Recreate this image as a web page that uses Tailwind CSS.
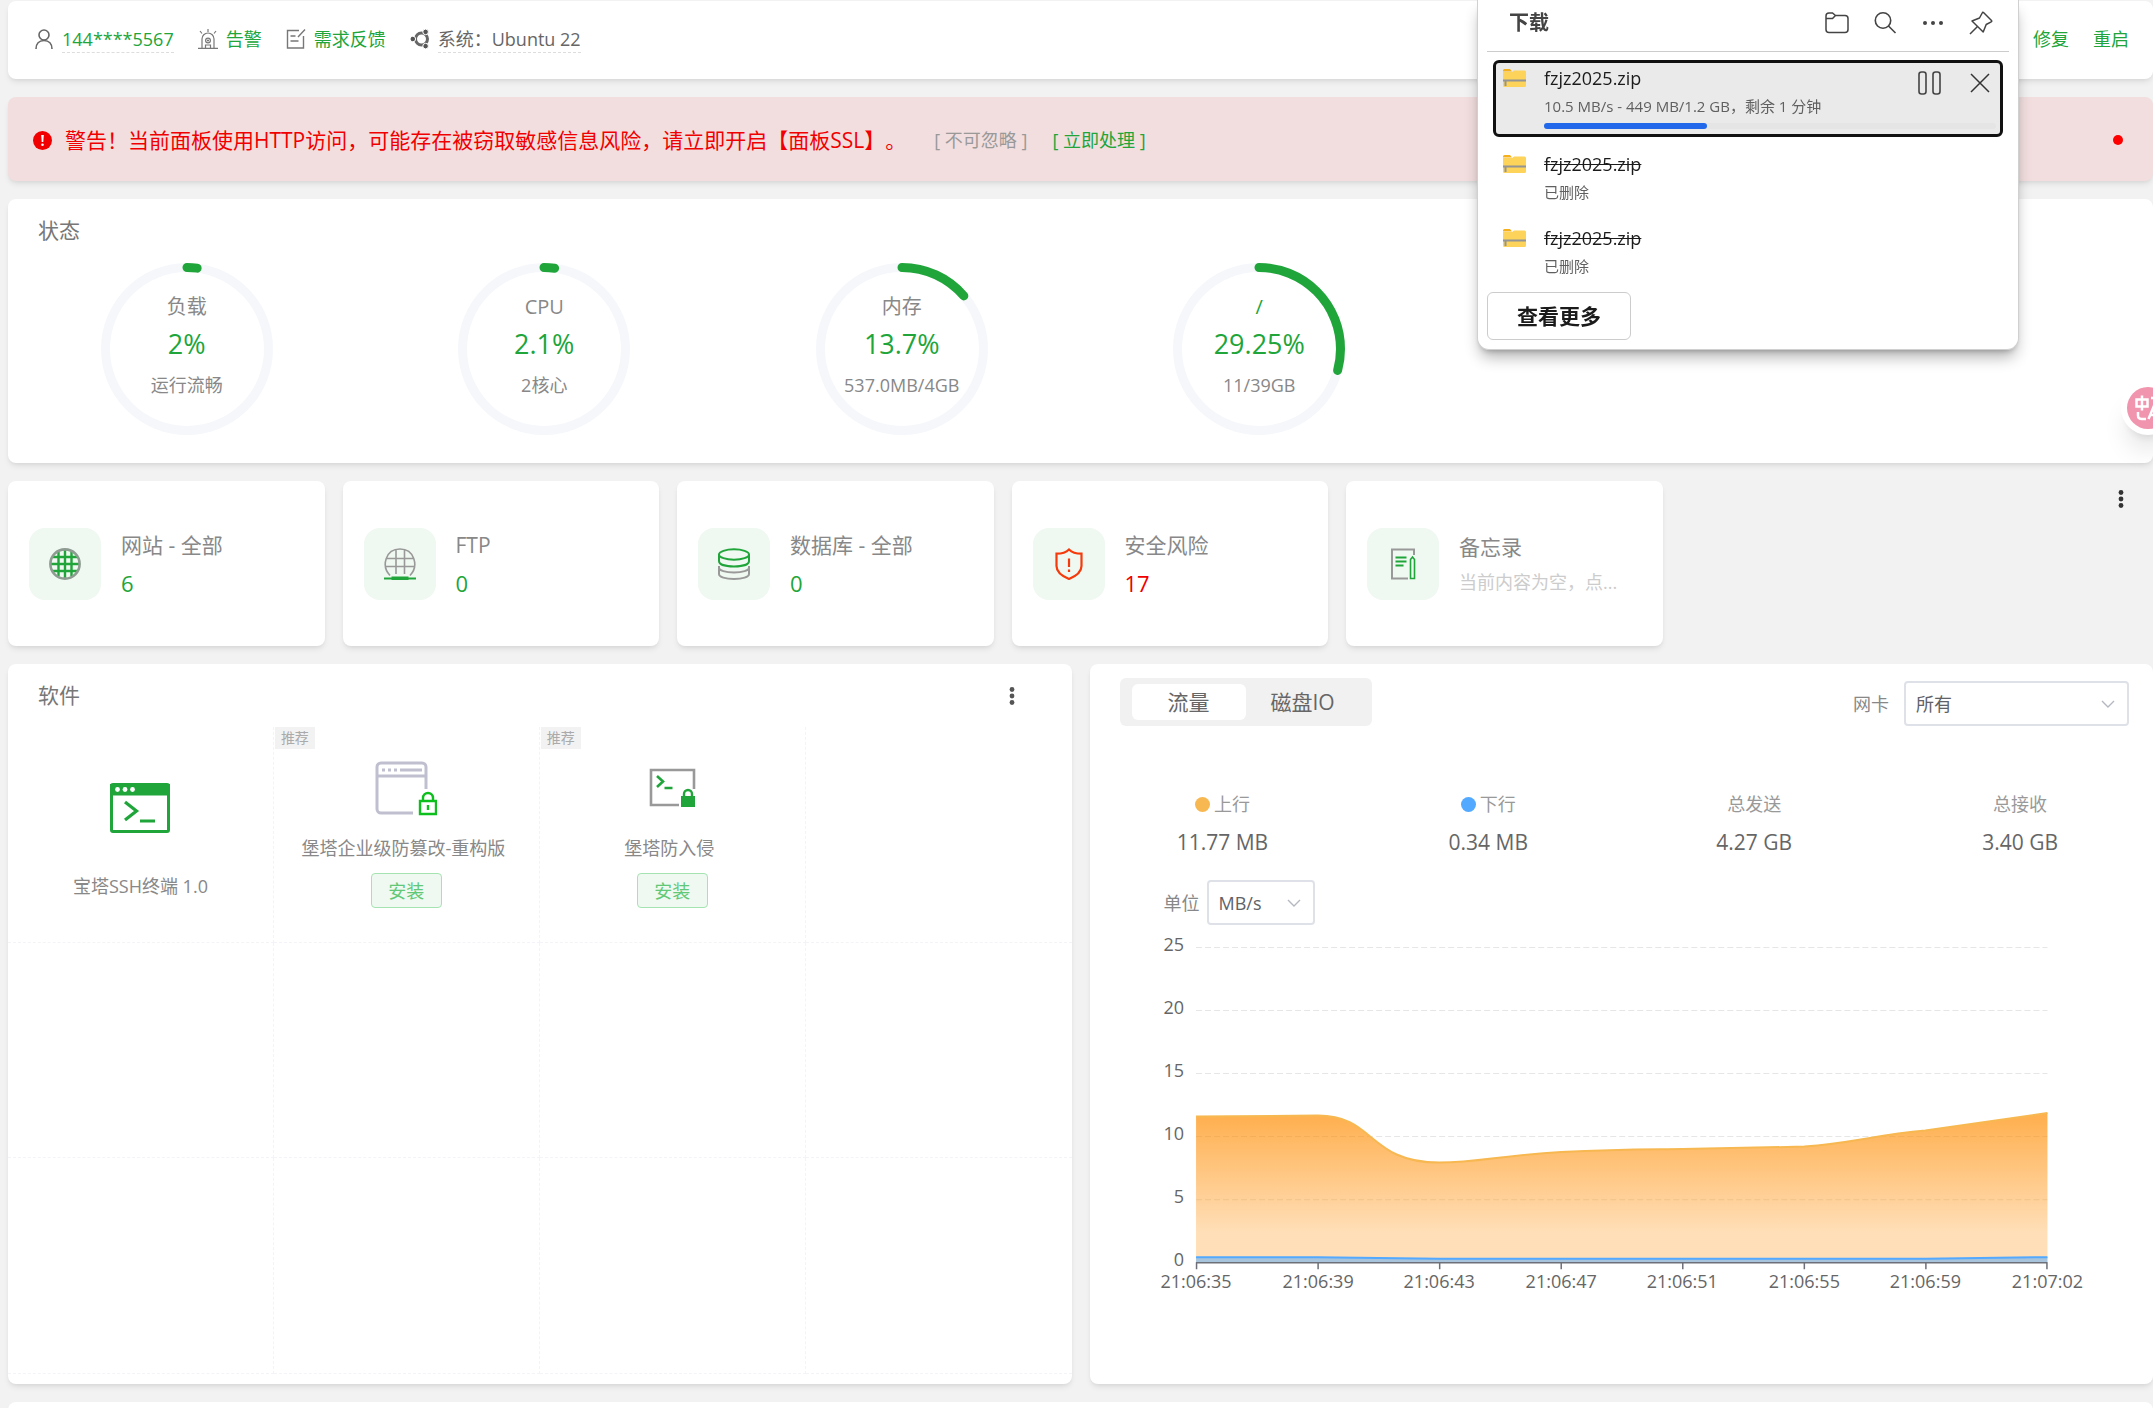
<!DOCTYPE html>
<html lang="zh-CN">
<head>
    <meta charset="UTF-8">
    <meta name="viewport" content="width=device-width, initial-scale=1.0">
    <title>宝塔面板 - 首页</title>
    <script src="https://cdn.jsdelivr.net/npm/@tailwindcss/browser@4"></script>
    <style>
        body {
            font-family: 'Open Sans', 'Noto Sans CJK SC', sans-serif;
            text-spacing-trim: space-all;
        }
    </style>
</head>
<body class="bg-[#f2f2f2] text-[#666] text-lg h-screen overflow-hidden">
<div class="relative flex flex-col gap-[18px] pt-px pl-2">

    <!-- 顶部信息栏 -->
    <header class="h-[78px] shrink-0 flex items-center justify-between bg-white rounded-lg shadow-md shadow-black/8 pb-[2px] pl-[26px] pr-[24px]">
        <div class="flex items-center gap-6 leading-[26px]">
            <div class="flex items-center gap-2">
                <svg class="w-5 h-5" viewBox="0 0 20 20" fill="none" stroke="#666" stroke-width="1.6">
                    <circle cx="10" cy="6" r="5"/>
                    <path d="M2 20c0-5 3-8.5 8-8.5s8 3.5 8 8.5"/>
                </svg>
                <a href="#" class="text-[#20a53a] border-b border-dashed border-[#ddd]">144****5567</a>
            </div>
            <div class="flex items-center gap-2">
                <svg class="w-5 h-5" viewBox="0 0 20 20" fill="none" stroke="#777" stroke-width="1.2">
                    <path d="M4 19V10a6 6 0 0 1 12 0v9M0 19.3h20M10 0v3M2 2l2 2.5M18 2l-2 2.5M7.5 19v-3h5v3"/>
                    <circle cx="10" cy="11.5" r="2.4"/>
                    <circle cx="10" cy="11.5" r=".5"/>
                </svg>
                <a href="#" class="text-[#20a53a]">告警</a>
            </div>
            <div class="flex items-center gap-2">
                <svg class="w-5 h-5" viewBox="0 0 20 20" fill="none" stroke="#777" stroke-width="1.4">
                    <path d="M13 1.5H1.5v17.5h16V7M4.5 7h5M4.5 12h8M12 8l7-7.5"/>
                </svg>
                <a href="#" class="text-[#20a53a]">需求反馈</a>
            </div>
            <div class="flex items-center gap-2">
                <svg class="w-5 h-5" viewBox="0 0 20 20" fill="none">
                    <circle cx="11.5" cy="10" r="6" stroke="#666" stroke-width="3"/>
                    <g fill="#555" stroke="#fff" stroke-width="1">
                        <circle cx="2.8" cy="10" r="2.8"/>
                        <circle cx="15.6" cy="2.9" r="2.8"/>
                        <circle cx="15.6" cy="17.1" r="2.8"/>
                    </g>
                </svg>
                <span class="border-b border-dashed border-[#ddd]">系统：Ubuntu 22</span>
            </div>
        </div>
        <nav class="flex gap-6 text-[#20a53a]">
            <a href="#">修复</a>
            <a href="#">重启</a>
        </nav>
    </header>

    <!-- 安全警告 -->
    <div class="h-[84px] shrink-0 flex items-center bg-[#f2dede] rounded-lg shadow-md shadow-black/8 pt-[2px] pl-[25px] pr-[30px]" role="alert">
        <svg class="w-[19px] h-[19px]" viewBox="0 0 19 19">
            <circle cx="9.5" cy="9.5" r="9.5" fill="#f00000"/>
            <path d="M8.200 4h2.600l-.5 7H8.700z" fill="#fff"/>
            <circle cx="9.5" cy="13.8" r="1.3" fill="#fff"/>
        </svg>
        <p class="ml-[13px] text-[21px] text-[#f00000]">警告！当前面板使用HTTP访问，可能存在被窃取敏感信息风险，请立即开启【面板SSL】。</p>
        <a href="#" class="ml-[28px] text-[#999]">[ 不可忽略 ]</a>
        <a href="#" class="ml-[25px] text-[#20a53a]">[ 立即处理 ]</a>
        <span class="ml-auto size-[10px] rounded-full bg-[#f00]"></span>
    </div>

    <!-- 状态 -->
    <section class="h-[264px] shrink-0 bg-white rounded-lg shadow-md shadow-black/8">
        <h2 class="h-16 pt-4 pl-[30px] text-[21px] leading-[30px] text-[#777]">状态</h2>
        <div class="grid grid-cols-6 text-[#888]">
            <div class="flex justify-center">
                <div class="relative size-[172px]">
                    <svg class="absolute inset-0" viewBox="0 0 172 172" fill="none" stroke-width="9">
                        <circle cx="86" cy="86" r="81.5" stroke="#f5f7fb"/>
                        <circle cx="86" cy="86" r="81.5" stroke="#20a53a" stroke-linecap="round" pathLength="100" stroke-dasharray="2 100" transform="rotate(-90 86 86)"/>
                    </svg>
                    <div class="relative flex flex-col items-center pt-[29px]">
                        <span class="text-[20px] leading-[30px] h-[34px]">负载</span>
                        <span class="text-[27px] leading-[36px] h-[44px] text-[#20a53a]">2%</span>
                        <span class="leading-[30px]">运行流畅</span>
                    </div>
                </div>
            </div>
            <div class="flex justify-center">
                <div class="relative size-[172px]">
                    <svg class="absolute inset-0" viewBox="0 0 172 172" fill="none" stroke-width="9">
                        <circle cx="86" cy="86" r="81.5" stroke="#f5f7fb"/>
                        <circle cx="86" cy="86" r="81.5" stroke="#20a53a" stroke-linecap="round" pathLength="100" stroke-dasharray="2.1 100" transform="rotate(-90 86 86)"/>
                    </svg>
                    <div class="relative flex flex-col items-center pt-[29px]">
                        <span class="text-[20px] leading-[30px] h-[34px]">CPU</span>
                        <span class="text-[27px] leading-[36px] h-[44px] text-[#20a53a]">2.1%</span>
                        <span class="leading-[30px]">2核心</span>
                    </div>
                </div>
            </div>
            <div class="flex justify-center">
                <div class="relative size-[172px]">
                    <svg class="absolute inset-0" viewBox="0 0 172 172" fill="none" stroke-width="9">
                        <circle cx="86" cy="86" r="81.5" stroke="#f5f7fb"/>
                        <circle cx="86" cy="86" r="81.5" stroke="#20a53a" stroke-linecap="round" pathLength="100" stroke-dasharray="13.7 100" transform="rotate(-90 86 86)"/>
                    </svg>
                    <div class="relative flex flex-col items-center pt-[29px]">
                        <span class="text-[20px] leading-[30px] h-[34px]">内存</span>
                        <span class="text-[27px] leading-[36px] h-[44px] text-[#20a53a]">13.7%</span>
                        <span class="leading-[30px]">537.0MB/4GB</span>
                    </div>
                </div>
            </div>
            <div class="flex justify-center">
                <div class="relative size-[172px]">
                    <svg class="absolute inset-0" viewBox="0 0 172 172" fill="none" stroke-width="9">
                        <circle cx="86" cy="86" r="81.5" stroke="#f5f7fb"/>
                        <circle cx="86" cy="86" r="81.5" stroke="#20a53a" stroke-linecap="round" pathLength="100" stroke-dasharray="29.25 100" transform="rotate(-90 86 86)"/>
                    </svg>
                    <div class="relative flex flex-col items-center pt-[29px]">
                        <span class="text-[20px] leading-[30px] h-[34px] text-[#20a53a]">/</span>
                        <span class="text-[27px] leading-[36px] h-[44px] text-[#20a53a]">29.25%</span>
                        <span class="leading-[30px]">11/39GB</span>
                    </div>
                </div>
            </div>
        </div>
    </section>

    <!-- 概览 -->
    <section class="relative grid grid-cols-6 gap-[18px] pr-[156px] h-[165px] shrink-0 text-[21px] leading-[30px] text-[#888]">
        <div class="flex items-center gap-5 pl-[21px] bg-white rounded-lg shadow-md shadow-black/8">
            <div class="size-[72px] shrink-0 rounded-2xl bg-[#eff8f1] flex items-center justify-center">
                <svg class="size-8" viewBox="0 0 32 32" fill="none">
                    <path d="M3.5 9h25M2 16h28M3.5 23h25M9.5 3.500v25M16 2v28M22.5 3.500v25" stroke="#20a53a" stroke-width="2.4"/>
                    <circle cx="16" cy="16" r="14.6" stroke="#8d9b90" stroke-width="2.6"/>
                </svg>
            </div>
            <div class="flex flex-col gap-2">
                <span>网站 - 全部</span>
                <a href="#" class="text-[22px] text-[#20a53a]">6</a>
            </div>
        </div>
        <div class="flex items-center gap-5 pl-[21px] bg-white rounded-lg shadow-md shadow-black/8">
            <div class="size-[72px] shrink-0 rounded-2xl bg-[#eff8f1] flex items-center justify-center">
                <svg class="size-8" viewBox="0 0 32 32" fill="none">
                    <path d="M6 27.5C-3 18 1.5 1 16 1s19 17 10 26.5M3 10.5h26M1 18.5h30M12 2v24M20.5 2v24" stroke="#999" stroke-width="1.6"/>
                    <path d="M0 30.5h32M8.500 29.500h15v2h-15z" stroke="#20a53a" stroke-width="2"/>
                </svg>
            </div>
            <div class="flex flex-col gap-2">
                <span>FTP</span>
                <a href="#" class="text-[22px] text-[#20a53a]">0</a>
            </div>
        </div>
        <div class="flex items-center gap-5 pl-[21px] bg-white rounded-lg shadow-md shadow-black/8">
            <div class="size-[72px] shrink-0 rounded-2xl bg-[#eff8f1] flex items-center justify-center">
                <svg class="size-8" viewBox="0 0 32 32" fill="none" stroke-width="2">
                    <path d="M1 18v8c0 3 6.500 5 15 5s15-2 15-5v-8M1 19.5c0 3 6.5 5 15 5s15-2 15-5" stroke="#999"/>
                    <ellipse cx="16" cy="6.5" rx="15" ry="5.2" stroke="#20a53a"/>
                    <path d="M1 6.5V13c0 3.5 6.5 5.5 15 5.5s15-2 15-5.5V6.5" stroke="#20a53a"/>
                </svg>
            </div>
            <div class="flex flex-col gap-2">
                <span>数据库 - 全部</span>
                <a href="#" class="text-[22px] text-[#20a53a]">0</a>
            </div>
        </div>
        <div class="flex items-center gap-5 pl-[21px] bg-white rounded-lg shadow-md shadow-black/8">
            <div class="size-[72px] shrink-0 rounded-2xl bg-[#eff8f1] flex items-center justify-center">
                <svg class="size-8" viewBox="0 0 32 32" fill="none" stroke="#f53b0c" stroke-width="2.2">
                    <path d="M16 1.5c3 3 7 4.2 12.5 4.2V18c0 6.5-6.5 10.5-12.5 13C10 28.5 3.5 24.5 3.5 18V5.700C9 5.700 13 4.500 16 1.5z"/>
                    <path d="M16 10.5v8.5M16 21.5v2.5"/>
                </svg>
            </div>
            <div class="flex flex-col gap-2">
                <span>安全风险</span>
                <a href="#" class="text-[22px] text-[#f00000]">17</a>
            </div>
        </div>
        <div class="flex items-center gap-5 pl-[21px] pr-10 bg-white rounded-lg shadow-md shadow-black/8">
            <div class="size-[72px] shrink-0 rounded-2xl bg-[#eff8f1] flex items-center justify-center">
                <svg class="size-8" viewBox="0 0 32 32" fill="none">
                    <path d="M27 7V1.5H5v29h16" stroke="#999" stroke-width="2"/>
                    <path d="M8.500 9.5h11M8.500 13.5h11M8.500 17.5h8" stroke="#20a53a" stroke-width="2"/>
                    <path d="M23.500 30.500V11.500l2-2.500 2 2.500v19z" stroke="#20a53a" stroke-width="1.6"/>
                </svg>
            </div>
            <div class="min-w-0 flex flex-col gap-[5px] pt-[2px]">
                <span>备忘录</span>
                <span class="text-lg leading-[30px] text-[#ccc]">当前内容为空，点...</span>
            </div>
        </div>
        <button type="button" class="absolute top-[6px] right-[26px] p-[3px]" aria-label="更多">
            <svg class="block w-[6px] h-[18px]" viewBox="0 0 6 18" fill="#333">
                <circle cx="3" cy="2.5" r="2.4"/>
                <circle cx="3" cy="9" r="2.4"/>
                <circle cx="3" cy="15.5" r="2.4"/>
            </svg>
        </button>
    </section>

    <div class="grid grid-cols-2 gap-[18px] h-[720px] shrink-0">
        <!-- 软件 -->
        <section class="flex flex-col pb-[10px] bg-white rounded-lg shadow-md shadow-black/8">
            <div class="h-[63px] shrink-0 flex items-center justify-between pl-[30px] pr-[57px]">
                <h2 class="text-[21px] text-[#777]">软件</h2>
                <button type="button" aria-label="更多">
                    <svg class="block w-[6px] h-[18px]" viewBox="0 0 6 18" fill="#555">
                        <circle cx="3" cy="2.5" r="2.4"/>
                        <circle cx="3" cy="9" r="2.4"/>
                        <circle cx="3" cy="15.5" r="2.4"/>
                    </svg>
                </button>
            </div>
            <div class="flex-1 grid grid-cols-4 grid-rows-3 text-[#888] leading-[26px]">
                <div class="flex flex-col items-center pt-[56px] border-r border-b border-dashed border-[#f4f4f8]">
                    <svg class="w-[60px] h-[50px]" viewBox="0 0 60 50" fill="none">
                        <rect x="1.5" y="1.5" width="57" height="47" rx="1.5" stroke="#20a53a" stroke-width="3"/>
                        <path d="M0 1h60v11.5H0z" fill="#20a53a"/>
                        <g fill="#fff">
                            <circle cx="7.5" cy="6.5" r="2.4"/>
                            <circle cx="15" cy="6.5" r="2.4"/>
                            <circle cx="22.5" cy="6.5" r="2.4"/>
                        </g>
                        <path d="M15 19l11.5 9L15 37M30 38h15" stroke="#20a53a" stroke-width="3.2"/>
                    </svg>
                    <span class="mt-10">宝塔SSH终端 1.0</span>
                </div>
                <div class="relative flex flex-col items-center pt-[34px] border-r border-b border-dashed border-[#f4f4f8]">
                    <span class="absolute top-0 left-px px-[6px] bg-[#f2f2f2] text-sm leading-[22px] text-[#aaa]">推荐</span>
                    <svg class="w-[62px] h-[55px]" viewBox="0 0 62 55" fill="none">
                        <path d="M51 28V6a4 4 0 0 0-4-4H6a4 4 0 0 0-4 4v42a4 4 0 0 0 4 4h32M2 15h49" stroke="#c0bfd0" stroke-width="3"/>
                        <path d="M7 9h3M13 9h3M19 9h3M25 9h22" stroke="#c0bfd0" stroke-width="3"/>
                        <path d="M45 40h16v13H45zM48 40v-3a5 5 0 0 1 10 0v3M53 44v5" stroke="#0dbf1c" stroke-width="2.4"/>
                    </svg>
                    <span class="mt-[19px] pr-[6px]">堡塔企业级防篡改-重构版</span>
                    <button type="button" class="mt-[12px] w-[71px] h-[35px] flex items-center justify-center rounded-sm border border-[#a6e3b2] bg-[#eff9f1] text-[#62c877]">安装</button>
                </div>
                <div class="relative flex flex-col items-center pt-[34px] border-r border-b border-dashed border-[#f4f4f8]">
                    <span class="absolute top-0 left-px px-[6px] bg-[#f2f2f2] text-sm leading-[22px] text-[#aaa]">推荐</span>
                    <svg class="w-[54px] h-[55px]" viewBox="0 0 54 55" fill="none">
                        <path d="M49 28V9H6v35h28" stroke="#999" stroke-width="2.6"/>
                        <path d="M12 15l6 5.5-6 5.500M19.500 27h8" stroke="#20a53a" stroke-width="2.6"/>
                        <path d="M36 35h14v11H36z" fill="#20a53a"/>
                        <path d="M39 35v-2a4 4 0 0 1 8 0v2" stroke="#20a53a" stroke-width="2.4"/>
                    </svg>
                    <span class="mt-[19px] pr-[6px]">堡塔防入侵</span>
                    <button type="button" class="mt-[12px] w-[71px] h-[35px] flex items-center justify-center rounded-sm border border-[#a6e3b2] bg-[#eff9f1] text-[#62c877]">安装</button>
                </div>
                <div class="border-b border-dashed border-[#f4f4f8]"></div>
                <div class="border-r border-b border-dashed border-[#f4f4f8]"></div>
                <div class="border-r border-b border-dashed border-[#f4f4f8]"></div>
                <div class="border-r border-b border-dashed border-[#f4f4f8]"></div>
                <div class="border-b border-dashed border-[#f4f4f8]"></div>
                <div class="border-r border-b border-dashed border-[#f4f4f8]"></div>
                <div class="border-r border-b border-dashed border-[#f4f4f8]"></div>
                <div class="border-r border-b border-dashed border-[#f4f4f8]"></div>
                <div class="border-b border-dashed border-[#f4f4f8]"></div>
            </div>
        </section>

        <!-- 流量 -->
        <section class="bg-white rounded-lg shadow-md shadow-black/8 pt-[14px]">
            <div class="flex items-center justify-between pl-[30px] pr-[24px]">
                <div class="flex h-12 py-[6px] px-3 rounded-md bg-[#f1f1f1] text-[21px] text-[#666]">
                    <button type="button" class="w-[114px] rounded-md bg-white">流量</button>
                    <button type="button" class="w-[114px]">磁盘IO</button>
                </div>
                <div class="flex items-center gap-[15px] pt-[3px]">
                    <label for="network-card" class="text-[#888]">网卡</label>
                    <div class="relative">
                        <select id="network-card" class="block appearance-none w-[225px] h-[45px] pl-[10px] rounded-sm border-2 border-[#dfe1e8] bg-white text-[#606266]">
                            <option>所有</option>
                        </select>
                        <svg class="absolute right-[14px] top-[19px] w-[14px] h-2 pointer-events-none" viewBox="0 0 14 8" fill="none" stroke="#b4b8c0" stroke-width="1.4">
                            <path d="M1 1l6 6 6-6"/>
                        </svg>
                    </div>
                </div>
            </div>

            <div class="grid grid-cols-4 mt-[64px] text-center">
                <div>
                    <div class="flex items-center justify-center gap-1 leading-[28px] text-[#999]"><i class="size-[15px] rounded-full bg-[#f7b851]"></i>上行</div>
                    <div class="mt-[9px] text-[21px] leading-[30px]">11.77 MB</div>
                </div>
                <div>
                    <div class="flex items-center justify-center gap-1 leading-[28px] text-[#999]"><i class="size-[15px] rounded-full bg-[#52a9ff]"></i>下行</div>
                    <div class="mt-[9px] text-[21px] leading-[30px]">0.34 MB</div>
                </div>
                <div>
                    <div class="leading-[28px] text-[#999]">总发送</div>
                    <div class="mt-[9px] text-[21px] leading-[30px]">4.27 GB</div>
                </div>
                <div>
                    <div class="leading-[28px] text-[#999]">总接收</div>
                    <div class="mt-[9px] text-[21px] leading-[30px]">3.40 GB</div>
                </div>
            </div>

            <div class="flex items-center gap-[7px] mt-[23px] pl-[74px]">
                <label for="unit" class="text-[#888]">单位</label>
                <div class="relative">
                    <select id="unit" class="block appearance-none w-[108px] h-[45px] pl-[10px] rounded-sm border-2 border-[#dfe1e8] bg-white text-[#606266]">
                        <option>MB/s</option>
                    </select>
                    <svg class="absolute right-[14px] top-[19px] w-[14px] h-2 pointer-events-none" viewBox="0 0 14 8" fill="none" stroke="#b4b8c0" stroke-width="1.4">
                        <path d="M1 1l6 6 6-6"/>
                    </svg>
                </div>
            </div>

            <svg class="block w-full" viewBox="1 0 1063 370">
                <defs>
                    <linearGradient id="up" x1="0" y1="0" x2="0" y2="1">
                        <stop offset="0" stop-color="#ff8c00" stop-opacity=".7"/>
                        <stop offset=".8" stop-color="#ff8c00" stop-opacity=".28"/>
                        <stop offset="1" stop-color="#ff8c00" stop-opacity=".28"/>
                    </linearGradient>
                </defs>
                <g stroke="#e6e6e6" stroke-width="1" stroke-dasharray="6 3">
                    <path d="M107 22.5H958M107 85.5H958M107 148.5H958M107 211.5H958M107 274.5H958"/>
                </g>
                <path fill="url(#up)" d="M107 191.5L229 190.5C286 190.5 279 237.5 350 237.5C391 237.5 411 230 472 227C533 224 563 224.5 593 224C634 223 674 222.5 715 221.5C762 218 786 210 836 205.5L958 188V337H107Z"/>
                <path fill="none" stroke="#f7b851" stroke-width="2" d="M107 191.5L229 190.5C286 190.5 279 237.5 350 237.5C391 237.5 411 230 472 227C533 224 563 224.5 593 224C634 223 674 222.5 715 221.5C762 218 786 210 836 205.5L958 188"/>
                <path fill="#52a9ff" fill-opacity=".5" d="M107 332H229L350 333.5H836L958 332V337H107Z"/>
                <path fill="none" stroke="#52a9ff" stroke-width="2" d="M107 332H229L350 333.5H836L958 332"/>
                <path fill="none" stroke="#6e7079" stroke-width="1.5" d="M107 337.5H958M107.5 337v7M229 337v7M350.5 337v7M472 337v7M593.5 337v7M715 337v7M836.5 337v7M957.5 337v7"/>
                <g fill="#666" font-size="18" text-anchor="end">
                    <text x="95" y="26">25</text>
                    <text x="95" y="89">20</text>
                    <text x="95" y="152">15</text>
                    <text x="95" y="215">10</text>
                    <text x="95" y="278">5</text>
                    <text x="95" y="341">0</text>
                </g>
                <g fill="#666" font-size="18" text-anchor="middle">
                    <text x="107" y="363">21:06:35</text>
                    <text x="229" y="363">21:06:39</text>
                    <text x="350" y="363">21:06:43</text>
                    <text x="472" y="363">21:06:47</text>
                    <text x="593" y="363">21:06:51</text>
                    <text x="715" y="363">21:06:55</text>
                    <text x="836" y="363">21:06:59</text>
                    <text x="958" y="363">21:07:02</text>
                </g>
            </svg>
        </section>
    </div>

    <section class="h-40 shrink-0 bg-white rounded-lg shadow-md shadow-black/8"></section>
</div>

<!-- 悬浮翻译按钮 -->
<button type="button" class="fixed top-[381px] right-[-22px] size-[54px] rounded-full bg-white shadow-xl shadow-black/10 flex items-center justify-center" aria-label="翻译">
    <svg class="size-[42px]" viewBox="0 0 42 42" fill="none" stroke="#fff" stroke-width="2.5">
        <circle cx="21" cy="21" r="21" fill="#f194ae" stroke="none"/>
        <path d="M9.5 12.5h11v7h-11zM15 8.500v15M11 25v3.500c0 2.500 1.500 3.500 4 3.500h4M21.500 32l5-12 5 12M23.500 28h6M24 11h6v5"/>
    </svg>
</button>

<!-- 下载面板 -->
<aside class="fixed top-0 right-[134px] w-[542px] h-[350px] px-[9px] bg-white rounded-b-xl border border-t-0 border-[#d0d0d0] shadow-lg shadow-black/30 text-[#1b1b1b]">
    <div class="flex items-center justify-between h-[52px] pb-5 pt-[14px] pl-[22px] pr-[16px] border-b border-[#ccc]">
        <h2 class="text-[20px] leading-none font-bold text-[#444]">下载</h2>
        <div class="flex items-center gap-6">
            <button type="button" aria-label="打开文件夹">
                <svg class="block size-6" viewBox="0 0 24 24" fill="none" stroke="#444" stroke-width="1.5">
                    <path d="M1 5a3 3 0 0 1 3-3h3.5l3 2.5H20a3 3 0 0 1 3 3V18.5a3 3 0 0 1-3 3H4a3 3 0 0 1-3-3zM1 7.5h6.5l3-3"/>
                </svg>
            </button>
            <button type="button" aria-label="搜索">
                <svg class="block size-6" viewBox="0 0 24 24" fill="none" stroke="#444" stroke-width="1.6">
                    <circle cx="10" cy="9.5" r="7.7"/>
                    <path d="M15.5 15l7 7"/>
                </svg>
            </button>
            <button type="button" aria-label="更多选项">
                <svg class="block size-6" viewBox="0 0 24 24" fill="#444">
                    <circle cx="4" cy="12" r="2"/>
                    <circle cx="12" cy="12" r="2"/>
                    <circle cx="20" cy="12" r="2"/>
                </svg>
            </button>
            <button type="button" aria-label="固定">
                <svg class="block size-6" viewBox="0 0 24 24" fill="none" stroke="#444" stroke-width="1.5" stroke-linejoin="round">
                    <path d="M14.5 1.5l8 8c.5.5.3 1-.3 1.3l-5 2.700-3 7.5L3 10l7.500-3L13.200 2c.3-.8.8-1 1.300-.5zM8.500 15.500L1 23"/>
                </svg>
            </button>
        </div>
    </div>

    <ul class="mt-2 px-[6px]">
        <li class="relative h-[77px] flex gap-[18px] pl-[7px] bg-[#eaeaea] border-3 border-[#111] rounded-md">
            <svg class="mt-[6px] w-[23px] h-[19px]" viewBox="0 0 23 19">
                <path d="M0 1.500A1.500 1.500 0 0 1 1.500 0H7l2 2.500H0z" fill="#f5b01a"/>
                <path d="M0 3h9l2-1.500h10.500A1.500 1.500 0 0 1 23 3v13.500a1.500 1.500 0 0 1-1.500 1.500h-20A1.500 1.500 0 0 1 0 16.500z" fill="#fdd35a"/>
                <path d="M0 11.500h23M2.500 11.500V17" stroke="#949494" stroke-width="2"/>
            </svg>
            <div>
                <p class="leading-[30px]">fzjz2025.zip</p>
                <p class="text-[15px] leading-[26px] text-[#606060]">10.5 MB/s - 449 MB/1.2 GB，剩余 1 分钟</p>
            </div>
            <div class="absolute right-[8px] top-[8px] flex gap-[26px] items-center">
                <button type="button" aria-label="暂停">
                    <svg class="block size-6" viewBox="0 0 24 24" fill="none" stroke="#444" stroke-width="1.6">
                        <rect x="1" y="1" width="7" height="22" rx="2.5"/>
                        <rect x="15" y="1" width="7" height="22" rx="2.5"/>
                    </svg>
                </button>
                <button type="button" aria-label="取消">
                    <svg class="block size-6" viewBox="0 0 24 24" fill="none" stroke="#333" stroke-width="1.5">
                        <path d="M3 3l18 18M21 3L3 21"/>
                    </svg>
                </button>
            </div>
            <div class="absolute left-[48px] right-[4px] bottom-[5px] h-[6px] rounded-full bg-[#e5e5e5]">
                <div class="h-full rounded-full bg-[#2168ea]" style="width: 36%"></div>
            </div>
        </li>
        <li class="h-[74px] mt-3 flex gap-[18px] pl-[10px]">
            <svg class="mt-[6px] w-[23px] h-[19px]" viewBox="0 0 23 19">
                <path d="M0 1.500A1.500 1.500 0 0 1 1.500 0H7l2 2.500H0z" fill="#f5b01a"/>
                <path d="M0 3h9l2-1.500h10.500A1.500 1.500 0 0 1 23 3v13.500a1.500 1.500 0 0 1-1.500 1.500h-20A1.500 1.500 0 0 1 0 16.500z" fill="#fdd35a"/>
                <path d="M0 11.500h23M2.500 11.500V17" stroke="#949494" stroke-width="2"/>
            </svg>
            <div>
                <p class="leading-[30px] line-through">fzjz2025.zip</p>
                <p class="text-[15px] leading-[26px] text-[#606060]">已删除</p>
            </div>
        </li>
        <li class="h-[74px] flex gap-[18px] pl-[10px]">
            <svg class="mt-[6px] w-[23px] h-[19px]" viewBox="0 0 23 19">
                <path d="M0 1.500A1.500 1.500 0 0 1 1.500 0H7l2 2.500H0z" fill="#f5b01a"/>
                <path d="M0 3h9l2-1.500h10.500A1.500 1.500 0 0 1 23 3v13.500a1.500 1.500 0 0 1-1.500 1.500h-20A1.500 1.500 0 0 1 0 16.500z" fill="#fdd35a"/>
                <path d="M0 11.500h23M2.500 11.500V17" stroke="#949494" stroke-width="2"/>
            </svg>
            <div>
                <p class="leading-[30px] line-through">fzjz2025.zip</p>
                <p class="text-[15px] leading-[26px] text-[#606060]">已删除</p>
            </div>
        </li>
    </ul>
    <button type="button" class="block -mt-[5px] w-[144px] h-12 rounded-md border border-[#ccc] text-[21px] font-bold">查看更多</button>
</aside>
</body>
</html>
